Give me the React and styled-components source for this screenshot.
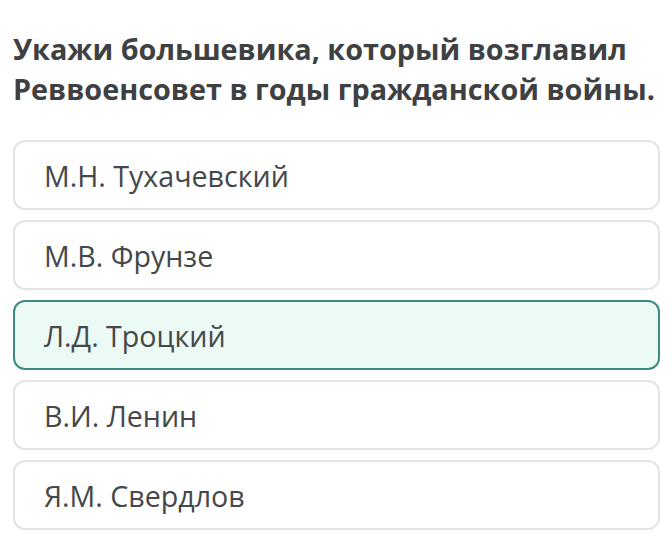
import React from "react";
import styled, { createGlobalStyle } from "styled-components";

const Global = createGlobalStyle`
  html, body { margin: 0; padding: 0; background: #fff; }
  body { font-family: "Open Sans", "Noto Sans", sans-serif; }
`;

const Page = styled.div`
  width: 672px;
  height: 549px;
  box-sizing: border-box;
  padding: 29px 12px 0 13px;
  overflow: hidden;
`;

const Title = styled.h1`
  margin: 0 0 31px 0;
  font-size: 28.8px;
  line-height: 40px;
  font-weight: 700;
  color: #3e4042;
`;

const List = styled.div`
  display: flex;
  flex-direction: column;
  gap: 10px;
`;

const Option = styled.div`
  height: 70px;
  box-sizing: border-box;
  display: flex;
  align-items: center;
  padding-left: 29px;
  border: 2px solid ${(p) => (p.$selected ? "#3d8a80" : "#e3e5e5")};
  background: ${(p) => (p.$selected ? "#ecfaf5" : "#fff")};
  border-radius: 12px;
  font-size: 28.6px;
  color: #45484a;
`;

const options = [
  "М.Н. Тухачевский",
  "М.В. Фрунзе",
  "Л.Д. Троцкий",
  "В.И. Ленин",
  "Я.М. Свердлов",
];

export default function App() {
  return (
    <Page>
      <Global />
      <Title>
        Укажи большевика, который возглавил
        <br />
        Реввоенсовет в годы гражданской войны.
      </Title>
      <List>
        {options.map((o, i) => (
          <Option key={o} $selected={i === 2}>
            {o}
          </Option>
        ))}
      </List>
    </Page>
  );
}
